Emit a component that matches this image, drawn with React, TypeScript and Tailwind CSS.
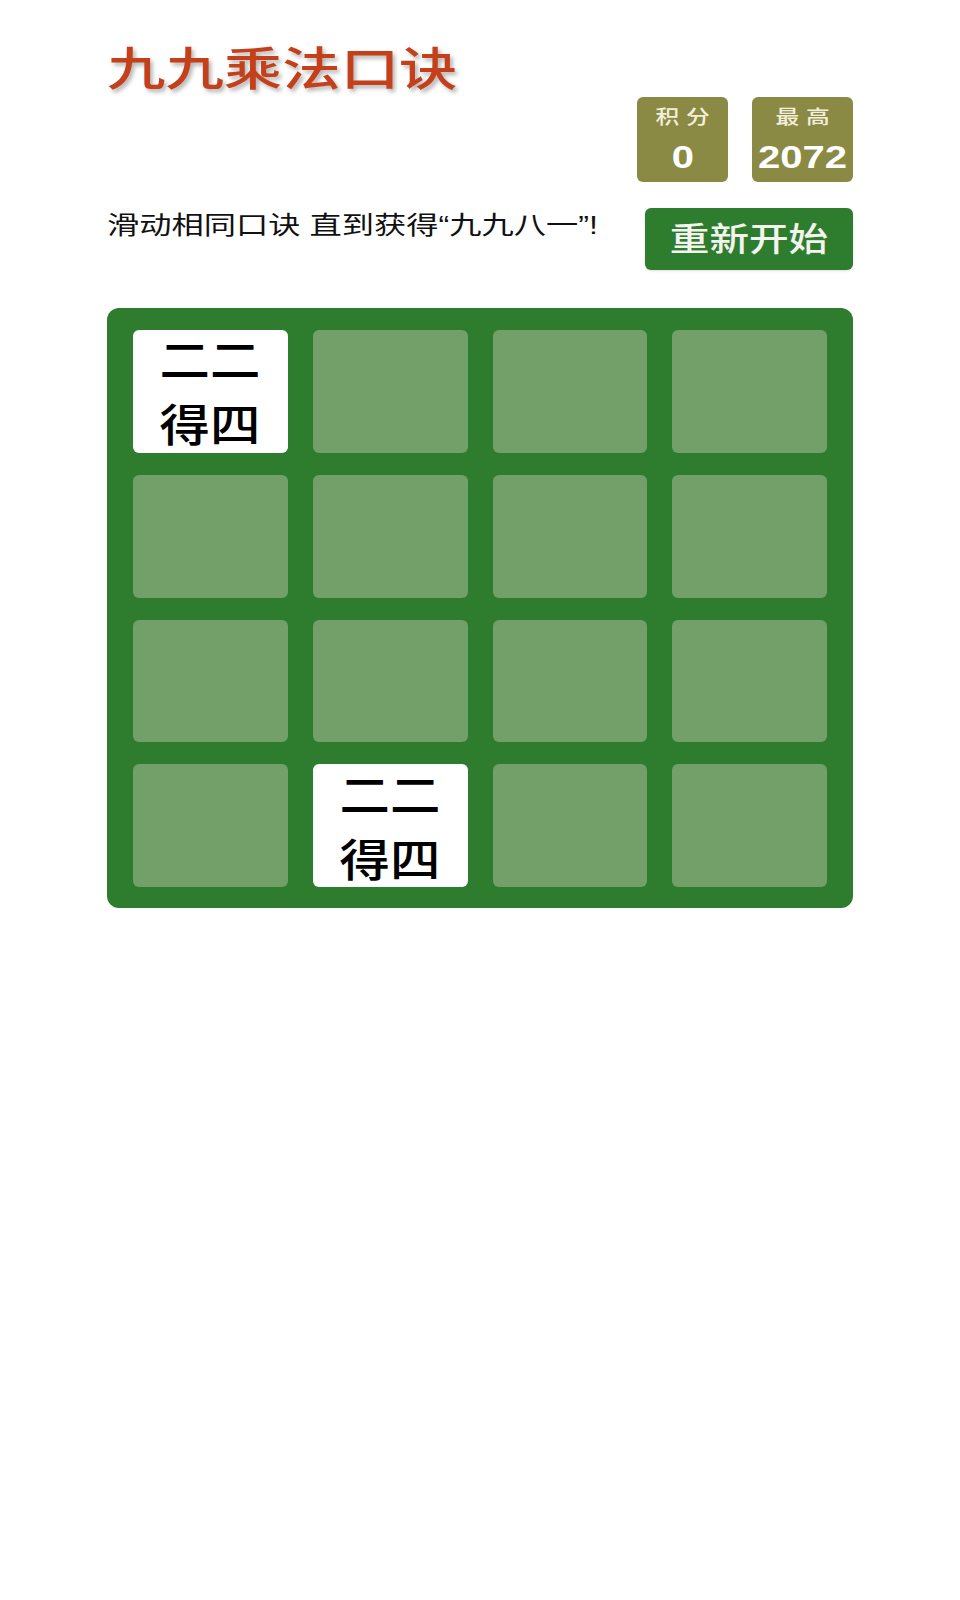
const cells = [
  "二二得四", "", "", "",
  "", "", "", "",
  "", "", "", "",
  "", "二二得四", "", "",
];

function Tile({ value }: { value: string }) {
  if (!value) {
    return <div className="rounded-[6px] bg-[#72a068]" />;
  }
  return (
    <div className="flex items-center justify-center rounded-[6px] bg-white">
      <div className="mt-[6px] scale-x-[1.12] text-center text-[45px] leading-[65px] font-medium text-black">
        {value.slice(0, 2)}
        <br />
        {value.slice(2)}
      </div>
    </div>
  );
}

export default function App() {
  return (
    <div className="min-h-[1600px] bg-white font-['Liberation_Sans','Noto_Sans_CJK_SC',sans-serif]">
      <div className="mx-auto w-[746px] pt-[46px]">
        <h1 className="h-[46px] w-fit origin-left scale-x-[1.27] text-[46px] leading-none font-medium text-[#c4401a] [text-shadow:2px_3px_4px_rgba(0,0,0,0.3)]">
          九九乘法口诀
        </h1>

        <div className="mt-[5px] flex justify-end gap-[24px]">
          <div className="flex w-[91px] flex-col items-center rounded-[6px] bg-[#8a8a45] pt-[11px] pb-[9px]">
            <span className="scale-x-[1.25] text-[19px] leading-[20px] font-medium text-[#f3efdc]">积 分</span>
            <span className="mt-[13px] scale-x-[1.25] text-[32px] leading-[32px] font-bold text-white">0</span>
          </div>
          <div className="flex w-[101px] flex-col items-center rounded-[6px] bg-[#8a8a45] pt-[11px] pb-[9px]">
            <span className="scale-x-[1.25] text-[19px] leading-[20px] font-medium text-[#f3efdc]">最 高</span>
            <span className="mt-[13px] scale-x-[1.25] text-[32px] leading-[32px] font-bold text-white">2072</span>
          </div>
        </div>

        <div className="mt-[26px] flex items-start justify-between">
          <p className="mt-[2px] w-fit origin-left scale-x-[1.29] text-[25px] leading-[30px] font-normal text-[#111]">
            滑动相同口诀 直到获得“九九八一”!
          </p>
          <button className="flex h-[62px] w-[208px] items-center justify-center rounded-[6px] bg-[#2e7d2e] shadow-sm">
            <span className="scale-x-[1.2] text-[33px] leading-none font-medium text-[#f4f4ee]">重新开始</span>
          </button>
        </div>

        <div className="mt-[38px] grid h-[600px] grid-cols-4 grid-rows-4 gap-x-[25px] gap-y-[22px] rounded-[12px] bg-[#2e7d2e] px-[26px] pt-[22px] pb-[21px]">
          {cells.map((c, i) => (
            <Tile key={i} value={c} />
          ))}
        </div>
      </div>
    </div>
  );
}
